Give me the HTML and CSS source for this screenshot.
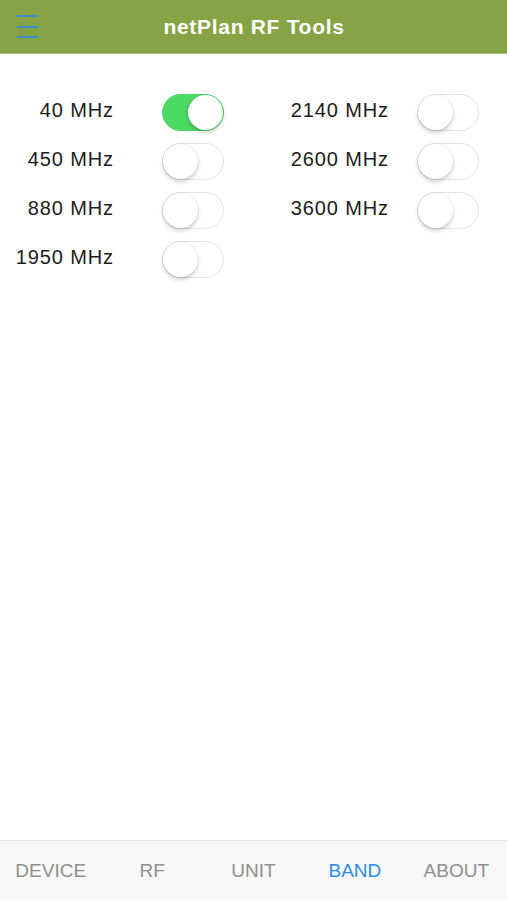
FILE: index.html
```html
<!DOCTYPE html>
<html lang="en">
<head>
  <meta charset="UTF-8">
  <meta name="viewport" content="width=device-width, initial-scale=1.0">
  <title>netPlan RF Tools</title>
  <link rel="stylesheet" href="styles.css">
</head>
<body>

  <div class="header">
    <div class="menu">
      <span></span><span></span><span></span>
    </div>
    <h1>netPlan RF Tools</h1>
  </div>

  <div class="bands">
    <div class="label">40 MHz</div>
    <div class="switch on"><div class="knob"></div></div>
    <div class="label">2140 MHz</div>
    <div class="switch"><div class="knob"></div></div>

    <div class="label">450 MHz</div>
    <div class="switch"><div class="knob"></div></div>
    <div class="label">2600 MHz</div>
    <div class="switch"><div class="knob"></div></div>

    <div class="label">880 MHz</div>
    <div class="switch"><div class="knob"></div></div>
    <div class="label">3600 MHz</div>
    <div class="switch"><div class="knob"></div></div>

    <div class="label">1950 MHz</div>
    <div class="switch"><div class="knob"></div></div>
  </div>

  <div class="tabs">
    <div class="tab">DEVICE</div>
    <div class="tab">RF</div>
    <div class="tab">UNIT</div>
    <div class="tab active">BAND</div>
    <div class="tab">ABOUT</div>
  </div>

</body>
</html>
```

FILE: styles.css
```css
body {
  margin: 0;
  font-family: "Liberation Sans", Arial, sans-serif;
  background-color: #fff;
  height: 900px;
  display: flex;
  flex-direction: column;
}
.header {
  height: 53px;
  background-color: #86a446;
  border-bottom: 1px solid #a7bf78;
  display: flex;
  align-items: center;
  justify-content: center;
  position: relative;
}
.header h1 {
  margin: 0 0 0 1px;
  color: #fff;
  font-size: 21px;
  font-weight: bold;
  letter-spacing: 0.7px;
}
.menu {
  position: absolute;
  left: 17px;
  top: 15px;
  width: 21px;
  display: flex;
  flex-direction: column;
  gap: 8.5px;
}
.menu span {
  display: block;
  height: 2px;
  background-color: #3b8ccb;
}
.bands {
  display: grid;
  grid-template-columns: 113px 111px 164px 91px;
  grid-auto-rows: 49px;
  align-items: center;
  padding-top: 32px;
}
.label {
  text-align: right;
  font-size: 20px;
  letter-spacing: 0.9px;
  margin-right: -1px;
  color: #1c1c1c;
}
.switch {
  justify-self: end;
  margin-top: 4px;
  width: 60px;
  height: 35px;
  border: 1px solid #e3e3e3;
  border-radius: 19px;
  background-color: #fff;
  position: relative;
}
.switch .knob {
  position: absolute;
  left: 0;
  top: 0;
  width: 35px;
  height: 35px;
  border-radius: 50%;
  background-color: #fff;
  box-shadow: 0 3px 4px rgba(0, 0, 0, 0.18), 0 0 0 1px rgba(0, 0, 0, 0.05);
}
.switch.on {
  background-color: #4cd964;
  border-color: #4cd964;
}
.switch.on .knob {
  left: 25px;
}
.tabs {
  margin-top: auto;
  height: 59px;
  border-top: 1px solid #e2e2e2;
  background-color: #f8f8f8;
  display: grid;
  grid-template-columns: repeat(5, 1fr);
  align-items: center;
}
.tab {
  text-align: center;
  font-size: 19px;
  color: #8f8f8f;
}
.tab.active {
  color: #2e8ae6;
}
```
